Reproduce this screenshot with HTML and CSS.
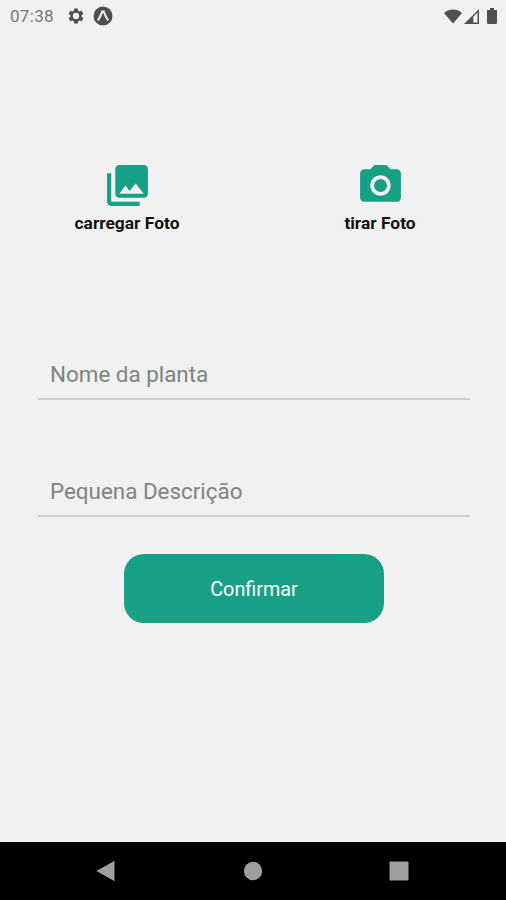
FILE: index.html
```html
<!DOCTYPE html>
<html lang="pt-BR">
<head>
  <meta charset="UTF-8">
  <meta name="viewport" content="width=device-width, initial-scale=1.0">
  <title>Nova planta</title>
  <link rel="stylesheet" href="styles.css">
</head>
<body>
  <header class="status-bar">
    <span class="clock">07:38</span>
    <svg class="icon-gear" viewBox="0 0 24 24"><path fill-rule="evenodd" d="M19.4 13a7.500 7.500 0 0 0 0-2l2.100-1.650a.5.5 0 0 0 .12-.64l-2-3.460a.5.5 0 0 0-.6-.22l-2.500 1a7.300 7.300 0 0 0-1.690-.98l-.38-2.650A.49.49 0 0 0 14 2h-4a.49.49 0 0 0-.49.42l-.38 2.650a7.700 7.700 0 0 0-1.690.98l-2.490-1a.5.5 0 0 0-.6.22l-2 3.460a.5.5 0 0 0 .12.64L4.570 11a8 8 0 0 0 0 2l-2.110 1.650a.5.5 0 0 0-.12.640l2 3.460c.12.22.38.3.6.22l2.500-1c.52.4 1.080.73 1.690.98l.38 2.650c.03.24.24.4.49.4h4c.25 0 .46-.16.49-.4l.38-2.650a7.300 7.300 0 0 0 1.690-.98l2.490 1c.22.08.48 0 .6-.22l2-3.460a.5.5 0 0 0-.12-.64zM12 16.200a4.200 4.200 0 1 1 0-8.400 4.200 4.200 0 0 1 0 8.400z"/></svg>
    <svg class="icon-expo" viewBox="0 0 20 20">
      <circle cx="10" cy="10" r="9.500"/>
      <path class="expo-mark" d="M4.800 14.400C6.700 12 8 9 9.200 5.600h1.600c1.200 3.400 2.500 6.400 4.400 8.800"/>
    </svg>
    <div class="status-right">
      <svg class="icon-wifi" viewBox="0 0 19 15"><path d="M9.500 15 0 3.700C5.500-1.100 13.500-1.100 19 3.700z"/></svg>
      <svg class="icon-signal" viewBox="0 0 15 15"><path fill-rule="evenodd" d="M15 0v15H0zM13.500 3.600 9.300 7.800v5.700h4.200z"/></svg>
      <svg class="icon-battery" viewBox="0 0 10 16"><path d="M3 0h4v2h2q1 0 1 1v12q0 1-1 1H1q-1 0-1-1V3q0-1 1-1h2z"/></svg>
    </div>
  </header>

  <main class="content">
    <div class="photo-options">
      <div class="photo-option">
        <svg viewBox="0 0 24 24"><path d="M22 16V4c0-1.100-.9-2-2-2H8c-1.100 0-2 .9-2 2v12c0 1.100.9 2 2 2h12c1.100 0 2-.9 2-2zm-11-4l2.030 2.710L16 11l4 5H8l3-4zM2 6v14c0 1.100.9 2 2 2h14v-2H4V6H2z"/></svg>
        <span>carregar Foto</span>
      </div>
      <div class="photo-option">
        <svg viewBox="0 0 24 24"><circle cx="12" cy="12" r="3.200"/><path d="M9 2L7.170 4H4c-1.100 0-2 .9-2 2v12c0 1.100.9 2 2 2h16c1.100 0 2-.9 2-2V6c0-1.100-.9-2-2-2h-3.170L15 2H9zm3 15c-2.760 0-5-2.240-5-5s2.240-5 5-5 5 2.240 5 5-2.240 5-5 5z"/></svg>
        <span>tirar Foto</span>
      </div>
    </div>

    <form class="plant-form">
      <input type="text" name="nome" placeholder="Nome da planta">
      <input type="text" name="descricao" placeholder="Pequena Descrição">
      <button type="button">Confirmar</button>
    </form>
  </main>

  <nav class="nav-bar">
    <svg viewBox="0 0 24 24"><path d="M2.500 12 20.500 1.800v20.400z"/></svg>
    <svg viewBox="0 0 24 24"><circle cx="12" cy="12" r="9.200"/></svg>
    <svg viewBox="0 0 24 24"><rect x="2.500" y="2.500" width="19" height="19" rx="1"/></svg>
  </nav>
</body>
</html>
```

FILE: styles.css
```css
* {
  box-sizing: border-box;
}

body {
  margin: 0;
  height: 900px;
  display: flex;
  flex-direction: column;
  background-color: #f1f1f1;
  font-family: Roboto, sans-serif;
  overflow: hidden;
}

svg {
  display: block;
  flex-shrink: 0;
}

/* status bar */
.status-bar {
  display: flex;
  align-items: center;
  height: 32px;
  padding: 0 9px 0 10px;
  fill: #505050;
}

.clock {
  width: 57px;
  font-size: 17px;
  letter-spacing: 0.3px;
  color: #777777;
}

.icon-gear {
  width: 18px;
  height: 18px;
}

.icon-expo {
  width: 20px;
  height: 20px;
  margin-left: 8px;
}

.expo-mark {
  fill: none;
  stroke: #f1f1f1;
  stroke-width: 2;
}

.status-right {
  display: flex;
  align-items: center;
  margin-left: auto;
}

.icon-wifi {
  width: 18px;
  height: 15px;
}

.icon-signal {
  width: 15px;
  height: 15px;
  margin-left: 2px;
}

.icon-battery {
  width: 10px;
  height: 16px;
  margin-left: 8px;
}

.content {
  flex: 1;
}

.photo-options {
  display: grid;
  grid-template-columns: 253px 253px;
  padding-top: 129px;
}

.photo-option {
  display: flex;
  flex-direction: column;
  align-items: center;
  padding-left: 1px;
  font-size: 17.4px;
  font-weight: bold;
  line-height: 24px;
  color: #111111;
}

.photo-option svg {
  width: 49px;
  height: 49px;
  margin-bottom: 1px;
  fill: #17a085;
}

/* form */
.plant-form {
  display: flex;
  flex-direction: column;
  padding: 113px 36px 0 38px;
}

.plant-form input {
  height: 52px;
  margin-bottom: 65px;
  padding: 1px 12px 0;
  border: none;
  border-bottom: 2px solid #cecece;
  background-color: transparent;
  font-family: inherit;
  font-size: 22.4px;
  outline: none;
}

.plant-form input::placeholder {
  color: #7c857f;
  opacity: 1;
}

.plant-form button {
  align-self: center;
  width: 260px;
  height: 69px;
  margin-top: -28px;
  padding-top: 3px;
  border: none;
  border-radius: 20px;
  background-color: #17a085;
  color: #ffffff;
  font-family: inherit;
  font-size: 19.8px;
}

/* android buttons */
.nav-bar {
  display: flex;
  justify-content: space-between;
  align-items: center;
  height: 58px;
  padding: 0 95px 0 94px;
  background-color: #000000;
  fill: #9e9e9e;
}

.nav-bar svg {
  width: 24px;
  height: 24px;
}
```
